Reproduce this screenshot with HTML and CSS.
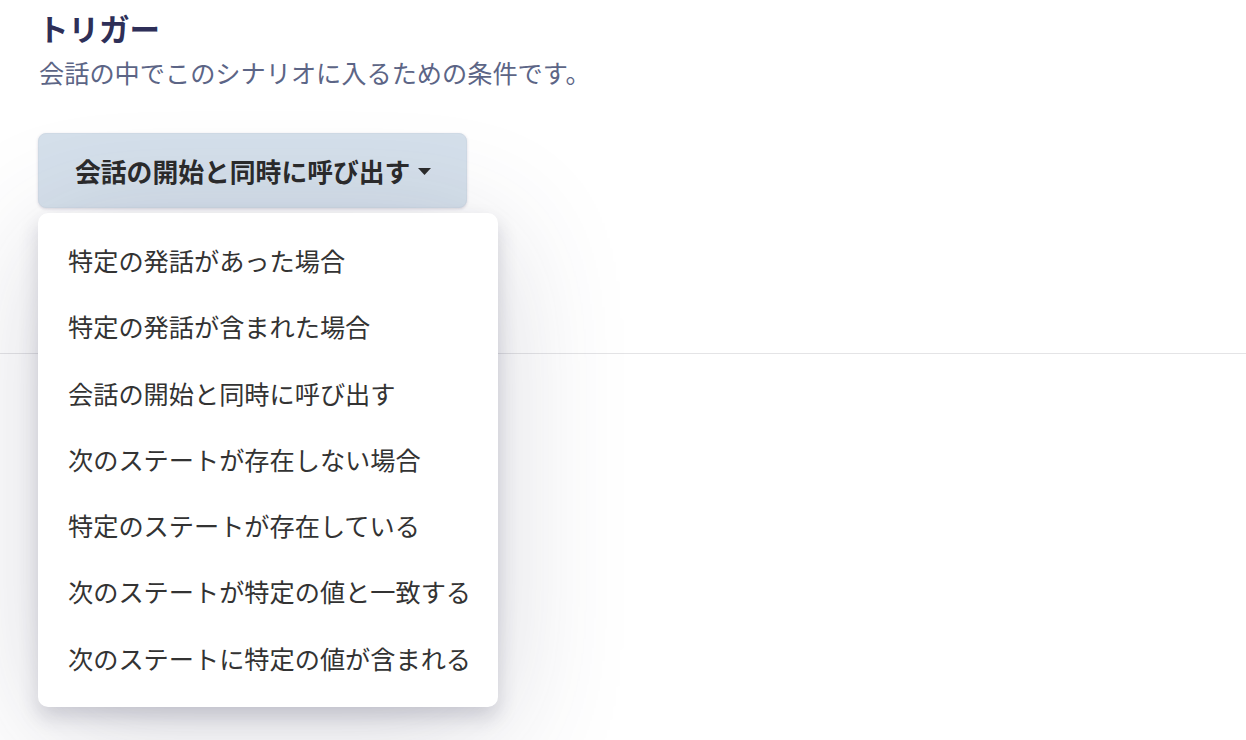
FILE: index.html
```html
<!DOCTYPE html>
<html lang="ja">
<head>
<meta charset="utf-8">
<link rel="stylesheet" href="styles.css">
</head>
<body>
<div class="page">
  <header class="head">
    <h1 class="title">トリガー</h1>
    <p class="subtitle">会話の中でこのシナリオに入るための条件です。</p>
  </header>
  <div class="dropdown">
    <button class="trigger-btn">
      <span>会話の開始と同時に呼び出す</span>
      <svg class="caret" viewBox="0 0 13 7"><path d="M0 0 L13 0 L6.5 7 Z" fill="#2b2b2b"/></svg>
    </button>
    <ul class="menu">
      <li class="item">特定の発話があった場合</li>
      <li class="item">特定の発話が含まれた場合</li>
      <li class="item">会話の開始と同時に呼び出す</li>
      <li class="item">次のステートが存在しない場合</li>
      <li class="item">特定のステートが存在している</li>
      <li class="item">次のステートが特定の値と一致する</li>
      <li class="item">次のステートに特定の値が含まれる</li>
    </ul>
  </div>
  <div class="next-section"></div>
</div>
</body>
</html>
```
FILE: styles.css
```css
html, body {
  margin: 0;
  padding: 0;
  background: #ffffff;
}
body {
  font-family: "Noto Sans CJK JP", "Noto Sans", sans-serif;
  width: 1246px;
  height: 740px;
  overflow: hidden;
}
.page {
  padding: 8px 0 0 0;
}
.head {
  padding-left: 38px;
}
.title {
  margin: 0;
  font-size: 30.5px;
  line-height: 40px;
  font-weight: 700;
  color: #2e2f58;
}
.subtitle {
  margin: 8px 0 0 1px;
  font-size: 25.2px;
  line-height: 32px;
  color: #5c6586;
  font-weight: 400;
}
.dropdown {
  position: relative;
  margin: 45px 0 0 38px;
  width: 429px;
}
.trigger-btn {
  display: flex;
  align-items: center;
  gap: 8px;
  box-sizing: border-box;
  width: 429px;
  height: 75px;
  padding: 0 36px;
  background: #d5e0eb;
  border: 1px solid #d0dbe6;
  border-radius: 8px;
  box-shadow: 0 1px 3px rgba(80, 70, 110, 0.2);
  font-family: inherit;
  font-size: 25.8px;
  font-weight: 700;
  color: #2b2b2b;
  cursor: pointer;
  white-space: nowrap;
}
.caret {
  flex: none;
  width: 13px;
  height: 7px;
  margin-top: 2px;
}
.menu {
  position: absolute;
  top: 80px;
  left: 0;
  z-index: 5;
  width: 460px;
  box-sizing: border-box;
  margin: 0;
  padding: 14px 0 16px;
  list-style: none;
  background: #ffffff;
  border-radius: 10px;
  box-shadow: 0 10px 20px rgba(40, 40, 70, 0.18), 0 24px 130px rgba(60, 60, 90, 0.2);
}
.item {
  padding-left: 30px;
  height: 66.3px;
  line-height: 66px;
  font-size: 25.2px;
  color: #333333;
  white-space: nowrap;
}
.next-section {
  margin-top: 145px;
  border-top: 1px solid #e4e4e6;
}
```
